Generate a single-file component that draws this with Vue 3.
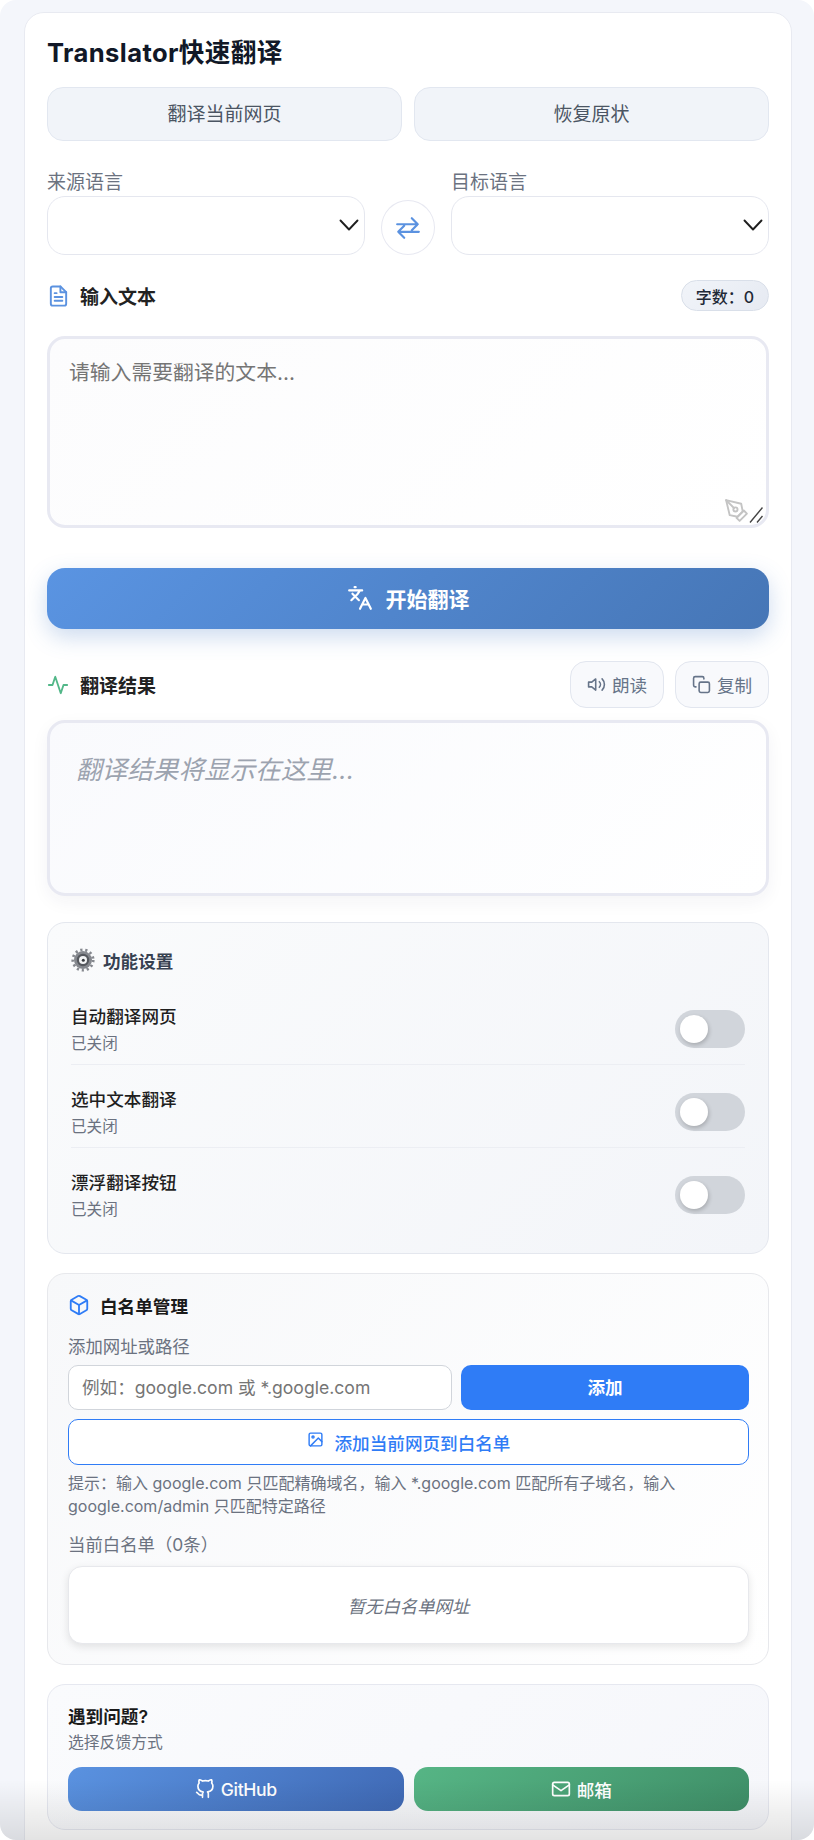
<template>
  <div class="page">
    <div class="card">
      <h1 class="title">Translator快速翻译</h1>

      <div class="page-actions">
        <button class="page-btn">翻译当前网页</button>
        <button class="page-btn">恢复原状</button>
      </div>

      <div class="lang-row">
        <div class="lang-col">
          <label class="lang-label">来源语言</label>
          <div class="select-wrap">
            <select class="lang-select"></select>
            <svg class="chevron" viewBox="0 0 20 12"><path d="M1.500 1.500l8.500 9 8.500-9" /></svg>
          </div>
        </div>
        <button class="swap-btn">
          <svg viewBox="0 0 24 24" width="26" height="26">
            <path d="M2 8.500h19M15.500 3l5.500 5.500-5.500 5.500M22 15.500H3M8.500 10l-5.500 5.500L8.500 21" />
          </svg>
        </button>
        <div class="lang-col">
          <label class="lang-label">目标语言</label>
          <div class="select-wrap">
            <select class="lang-select"></select>
            <svg class="chevron" viewBox="0 0 20 12"><path d="M1.500 1.500l8.500 9 8.500-9" /></svg>
          </div>
        </div>
      </div>

      <div class="section-head input-head">
        <div class="section-name">
          <svg class="doc-icon" viewBox="0 0 24 24">
            <path d="M14 2H6a2 2 0 0 0-2 2v16a2 2 0 0 0 2 2h12a2 2 0 0 0 2-2V8z" />
            <path d="M14 2v6h6M16 13H8M16 17H8M10 9H8" />
          </svg>
          <span>输入文本</span>
        </div>
        <span class="count">字数：0</span>
      </div>

      <div class="input-wrap">
        <textarea class="source" placeholder="请输入需要翻译的文本..."></textarea>
        <svg class="pen-icon" viewBox="0 0 24 24">
          <path d="M12 19l7-7 3 3-7 7-3-3z" />
          <path d="M18 13l-1.500-7.500L2 2l3.500 14.500L13 18l5-5z" />
          <path d="M2 2l7.586 7.586" />
          <circle cx="11" cy="11" r="2" />
        </svg>
        <svg class="grip" viewBox="0 0 14 16"><path d="M1 15.500L13.500 .5M8 15.500l5.500-6.500" /></svg>
      </div>

      <button class="translate-btn">
        <svg viewBox="0 0 24 24" width="26" height="26">
          <path d="M5 8l6 6M4 14l6-6 2-3M2 5h12M7 2h1M22 22l-5-10-5 10M14 18h6" />
        </svg>
        <span>开始翻译</span>
      </button>

      <div class="section-head result-head">
        <div class="section-name">
          <svg class="pulse-icon" viewBox="0 0 24 24"><path d="M22 12h-4l-3 9L9 3l-3 9H2" /></svg>
          <span>翻译结果</span>
        </div>
        <div class="result-actions">
          <button class="tool-btn">
            <svg viewBox="0 0 24 24">
              <path d="M11 5L6 9H2v6h4l5 4V5z" />
              <path d="M15.540 8.460a5 5 0 0 1 0 7.070M19.070 4.930a10 10 0 0 1 0 14.140" />
            </svg>
            朗读
          </button>
          <button class="tool-btn">
            <svg viewBox="0 0 24 24">
              <rect x="9" y="9" width="13" height="13" rx="2" />
              <path d="M5 15H4a2 2 0 0 1-2-2V4a2 2 0 0 1 2-2h9a2 2 0 0 1 2 2v1" />
            </svg>
            复制
          </button>
        </div>
      </div>

      <div class="result-box">翻译结果将显示在这里...</div>

      <section class="settings">
        <div class="settings-title">
          <svg class="gear-icon" viewBox="0 0 24 24">
            <circle class="gear-teeth" cx="12" cy="12" r="10.200" />
            <circle cx="12" cy="12" r="9" fill="#85888e" />
            <circle cx="12" cy="12" r="6.200" fill="#55585e" />
            <circle cx="12" cy="12" r="4" fill="#f3f4f5" />
            <circle cx="12.300" cy="12.200" r="1.500" fill="#34373c" />
          </svg>
          <span>功能设置</span>
        </div>
        <div v-for="item in settings" :key="item" class="setting-row">
          <div>
            <div class="setting-name">{{ item }}</div>
            <div class="setting-state">已关闭</div>
          </div>
          <div class="toggle"><span class="knob"></span></div>
        </div>
      </section>

      <section class="whitelist">
        <div class="whitelist-title">
          <svg class="cube-icon" viewBox="0 0 24 24">
            <path d="M21 16V8a2 2 0 0 0-1-1.730l-7-4a2 2 0 0 0-2 0l-7 4A2 2 0 0 0 3 8v8a2 2 0 0 0 1 1.730l7 4a2 2 0 0 0 2 0l7-4A2 2 0 0 0 21 16z" />
            <path d="M3.270 6.960L12 12.010l8.730-5.050M12 22.080V12" />
          </svg>
          <span>白名单管理</span>
        </div>
        <div class="field-label">添加网址或路径</div>
        <div class="add-row">
          <input class="url-input" placeholder="例如：google.com 或 *.google.com" />
          <button class="add-btn">添加</button>
        </div>
        <button class="add-current">
          <svg viewBox="0 0 24 24">
            <rect x="3" y="3" width="18" height="18" rx="2" />
            <circle cx="8.500" cy="8.500" r="1.500" />
            <path d="M21 15l-5-5L5 21" />
          </svg>
          添加当前网页到白名单
        </button>
        <p class="hint">提示：输入 google.com 只匹配精确域名，输入 *.google.com 匹配所有子域名，输入 google.com/admin 只匹配特定路径</p>
        <div class="field-label current-label">当前白名单（{{ whitelist.length }}条）</div>
        <div class="empty-list">暂无白名单网址</div>
      </section>

      <section class="feedback">
        <div class="feedback-title">遇到问题?</div>
        <div class="feedback-sub">选择反馈方式</div>
        <div class="feedback-btns">
          <button class="fb-btn fb-github">
            <svg viewBox="0 0 24 24">
              <path d="M9 19c-5 1.500-5-2.500-7-3m14 6v-3.870a3.370 3.370 0 0 0-.940-2.610c3.140-.350 6.440-1.540 6.440-7A5.440 5.440 0 0 0 20 4.770 5.070 5.070 0 0 0 19.910 1S18.730.650 16 2.480a13.380 13.380 0 0 0-7 0C6.270.650 5.090 1 5.090 1A5.070 5.070 0 0 0 5 4.770a5.440 5.440 0 0 0-1.500 3.780c0 5.420 3.300 6.610 6.440 7A3.370 3.370 0 0 0 9 18.130V22" />
            </svg>
            <span class="fb-label">GitHub</span>
          </button>
          <button class="fb-btn fb-mail">
            <svg viewBox="0 0 24 24">
              <rect x="2" y="4" width="20" height="16" rx="2" />
              <path d="M22 7l-10 7L2 7" />
            </svg>
            邮箱
          </button>
        </div>
      </section>
    </div>
    <div class="bottom-fade"></div>
  </div>
</template>

<script setup>
const settings = ['自动翻译网页', '选中文本翻译', '漂浮翻译按钮']
const whitelist = []
</script>

<style>
html,
body {
  margin: 0;
  background: #fff;
}
</style>

<style scoped>
.page {
  position: relative;
  height: 1840px;
  box-sizing: border-box;
  padding: 12px 22px 0 24px;
  background: #f4f6fb;
  border-radius: 16px;
  overflow: hidden;
  font-family: Inter, "Noto Sans CJK SC", sans-serif;
  color: #1f2937;
}

.card {
  height: 1900px;
  box-sizing: border-box;
  padding: 25px 22px 0;
  background: #fff;
  border: 1px solid #e8eaf1;
  border-radius: 20px;
}

button {
  font-family: inherit;
  cursor: pointer;
}

svg {
  fill: none;
  stroke: currentColor;
  stroke-width: 2;
  stroke-linecap: round;
  stroke-linejoin: round;
  flex-shrink: 0;
}

.title {
  margin: 0 0 19px;
  font-size: 25.600px;
  line-height: 30px;
  font-weight: 700;
  letter-spacing: 0.400px;
  color: #111827;
}

.page-actions {
  display: grid;
  grid-template-columns: 1fr 1fr;
  gap: 12px;
}

.page-btn {
  height: 54px;
  padding: 0 0 3px;
  background: #f1f4f9;
  border: 1px solid #e2e7f0;
  border-radius: 16px;
  font-size: 19px;
  color: #4b5563;
}

.lang-row {
  display: flex;
  align-items: flex-end;
  gap: 16px;
  margin-top: 28px;
}

.lang-col {
  flex: 1;
}

.lang-label {
  display: block;
  font-size: 19px;
  line-height: 27px;
  color: #6b7280;
}

.select-wrap {
  position: relative;
}

.lang-select {
  display: block;
  width: 100%;
  height: 59px;
  appearance: none;
  background: #fff;
  border: 1px solid #e5e7ef;
  border-radius: 18px;
}

.chevron {
  position: absolute;
  right: 6px;
  top: 23px;
  width: 20px;
  height: 12px;
  stroke: #1f1f1f;
  stroke-width: 1.900;
  pointer-events: none;
}

.swap-btn {
  width: 54px;
  height: 55px;
  padding: 0;
  display: flex;
  align-items: center;
  justify-content: center;
  background: #fff;
  border: 1px solid #e7e8f1;
  border-radius: 50%;
  color: #5b92e0;
}

.section-head {
  display: flex;
  align-items: center;
  justify-content: space-between;
}

.section-name {
  display: flex;
  align-items: center;
  font-size: 19px;
  font-weight: 600;
  color: #222;
}

.input-head {
  margin-top: 25px;
  height: 31px;
}

.doc-icon {
  width: 23px;
  height: 24px;
  margin: 0 10px 0 0;
  stroke: #5b92e0;
}

.count {
  height: 31px;
  box-sizing: border-box;
  padding: 0 14px;
  display: flex;
  align-items: center;
  background: linear-gradient(135deg, #f1f4f9, #e6eaf2);
  border: 1px solid #d9dfe9;
  border-radius: 16px;
  font-size: 16px;
  font-weight: 500;
  color: #1f2937;
}

.input-wrap {
  position: relative;
  margin-top: 25px;
}

.source {
  display: block;
  width: 100%;
  height: 192px;
  box-sizing: border-box;
  padding: 18px 19px;
  background: linear-gradient(135deg, #fcfcfd, #fff);
  border: 3px solid #e8e9f2;
  border-radius: 18px;
  font-family: inherit;
  font-size: 20.800px;
  line-height: 32px;
  resize: none;
  outline: none;
}

.pen-icon {
  position: absolute;
  right: 20px;
  bottom: 5px;
  width: 25px;
  height: 25px;
  stroke: #c4c4c4;
  stroke-width: 1.800;
  pointer-events: none;
}

.grip {
  position: absolute;
  right: 6px;
  bottom: 5px;
  width: 14px;
  height: 16px;
  stroke: #444;
  stroke-width: 1.400;
  stroke-linecap: butt;
  pointer-events: none;
}

.translate-btn {
  width: 100%;
  height: 61px;
  margin-top: 40px;
  padding: 0 0 2px;
  display: flex;
  align-items: center;
  justify-content: center;
  gap: 13px;
  background: linear-gradient(135deg, #5a94e2, #4676b6);
  border: none;
  border-radius: 18px;
  box-shadow: 0 8px 22px rgba(74, 125, 196, 0.28);
  font-size: 21px;
  font-weight: 600;
  color: #fff;
}

.result-head {
  margin-top: 32px;
}

.pulse-icon {
  width: 22px;
  height: 22px;
  margin: 0 11px 0 0;
  stroke: #52b788;
}

.result-actions {
  display: flex;
  gap: 11px;
}

.tool-btn {
  width: 94px;
  height: 47px;
  padding: 0;
  display: flex;
  align-items: center;
  justify-content: center;
  gap: 6px;
  background: #f8f9fc;
  border: 1px solid #e2e6ef;
  border-radius: 16px;
  font-size: 17.600px;
  color: #667489;
}

.tool-btn svg {
  width: 19px;
  height: 19px;
}

.result-box {
  height: 176px;
  box-sizing: border-box;
  margin-top: 12px;
  padding: 27px 26px;
  background: linear-gradient(135deg, #f9fafd, #fff);
  border: 3px solid #e8e9f2;
  border-radius: 18px;
  box-shadow: 0 6px 18px rgba(30, 40, 80, 0.05);
  font-size: 25.600px;
  line-height: 40px;
  font-style: italic;
  color: #9ca3af;
}

.settings {
  margin-top: 26px;
  padding: 24px 23px 0;
  height: 332px;
  box-sizing: border-box;
  background: linear-gradient(135deg, #fafbfc, #f3f5f9);
  border: 1px solid #e4e7ee;
  border-radius: 18px;
}

.settings-title {
  display: flex;
  align-items: center;
  gap: 8px;
  height: 26px;
  margin-bottom: 31px;
  font-size: 17.600px;
  font-weight: 600;
  color: #374151;
}

.gear-icon {
  width: 24px;
  height: 24px;
  stroke: none;
}

.gear-teeth {
  fill: none;
  stroke: #85888e;
  stroke-width: 2.800;
  stroke-dasharray: 2.200 2.800;
  stroke-linecap: butt;
}

.setting-row {
  display: flex;
  align-items: center;
  justify-content: space-between;
  padding-bottom: 6px;
  margin-bottom: 22px;
  border-bottom: 1px solid #eceef3;
}

.setting-row:last-child {
  border-bottom: none;
  margin-bottom: 0;
}

.setting-name {
  font-size: 17.600px;
  line-height: 26px;
  font-weight: 500;
  color: #1f1f1f;
}

.setting-state {
  font-size: 15.600px;
  line-height: 28px;
  color: #6b7280;
}

.toggle {
  position: relative;
  width: 70px;
  height: 38px;
  margin-bottom: 4px;
  background: #d1d5db;
  border-radius: 19px;
}

.knob {
  position: absolute;
  left: 5px;
  top: 5px;
  width: 28px;
  height: 28px;
  background: #fff;
  border-radius: 50%;
  box-shadow: 1px 2px 4px rgba(0, 0, 0, 0.2);
}

.whitelist {
  margin-top: 19px;
  padding: 18px 19px 20px 20px;
  background: linear-gradient(135deg, #f7f8fa, #fff);
  border: 1px solid #e7e8ec;
  border-radius: 18px;
}

.whitelist-title {
  display: flex;
  align-items: center;
  gap: 10px;
  height: 26px;
  font-size: 17.600px;
  font-weight: 600;
  color: #1a1a1a;
}

.cube-icon {
  width: 22px;
  height: 22px;
  stroke: #2f7cf6;
}

.field-label {
  margin-top: 17px;
  font-size: 17.400px;
  line-height: 24px;
  color: #6b7280;
}

.add-row {
  display: grid;
  grid-template-columns: 4fr 3fr;
  gap: 9px;
  margin-top: 6px;
}

.url-input {
  height: 45px;
  box-sizing: border-box;
  min-width: 0;
  padding: 0 13px;
  background: #fff;
  border: 1px solid #d1d5db;
  border-radius: 10px;
  font-family: inherit;
  font-size: 17.600px;
  outline: none;
}

.add-btn {
  height: 45px;
  padding: 0 0 2px;
  background: #2f7cf6;
  border: none;
  border-radius: 10px;
  font-size: 17.600px;
  font-weight: 600;
  color: #fff;
}

.add-current {
  width: 100%;
  height: 46px;
  margin-top: 9px;
  display: flex;
  align-items: center;
  justify-content: center;
  gap: 11px;
  background: #fff;
  border: 1px solid #2f7cf6;
  border-radius: 10px;
  font-size: 17.600px;
  font-weight: 500;
  color: #2f7cf6;
}

.add-current svg {
  width: 17px;
  height: 17px;
  margin-top: -6px;
}

.hint {
  margin: 7px 0 0;
  font-size: 16px;
  line-height: 22.500px;
  color: #6b7280;
}

.current-label {
  margin-top: 16px;
}

.empty-list {
  height: 78px;
  box-sizing: border-box;
  margin-top: 9px;
  display: flex;
  align-items: center;
  justify-content: center;
  background: #fff;
  border: 1px solid #e7e8ec;
  border-radius: 14px;
  box-shadow: 0 3px 8px rgba(0, 0, 0, 0.1);
  font-size: 17.400px;
  font-style: italic;
  color: #6b7280;
}

.feedback {
  margin-top: 19px;
  padding: 19px 19px 18px 20px;
  background: linear-gradient(135deg, #fafbfd, #f6f7fb);
  border: 1px solid #e6e8f0;
  border-radius: 18px;
}

.feedback-title {
  font-size: 17.600px;
  line-height: 26px;
  font-weight: 600;
  color: #1a1a1a;
}

.feedback-sub {
  margin-top: 1px;
  font-size: 15.800px;
  line-height: 24px;
  color: #6b7280;
}

.feedback-btns {
  display: grid;
  grid-template-columns: 1fr 1fr;
  gap: 10px;
  margin-top: 12px;
}

.fb-btn {
  height: 44px;
  display: flex;
  align-items: center;
  justify-content: center;
  gap: 6px;
  border: none;
  border-radius: 14px;
  font-size: 17.600px;
  font-weight: 500;
  color: #fff;
}

.fb-btn svg {
  width: 20px;
  height: 20px;
}

.fb-label {
  letter-spacing: -0.400px;
}

.fb-github {
  background: linear-gradient(135deg, #5a92e0, #3f69b5);
}

.fb-mail {
  background: linear-gradient(135deg, #56b585, #3f8f68);
}

.bottom-fade {
  position: absolute;
  left: 0;
  right: 0;
  bottom: 0;
  height: 60px;
  background: linear-gradient(to bottom, rgba(0, 0, 0, 0), rgba(0, 0, 0, 0.11));
  pointer-events: none;
}
</style>
